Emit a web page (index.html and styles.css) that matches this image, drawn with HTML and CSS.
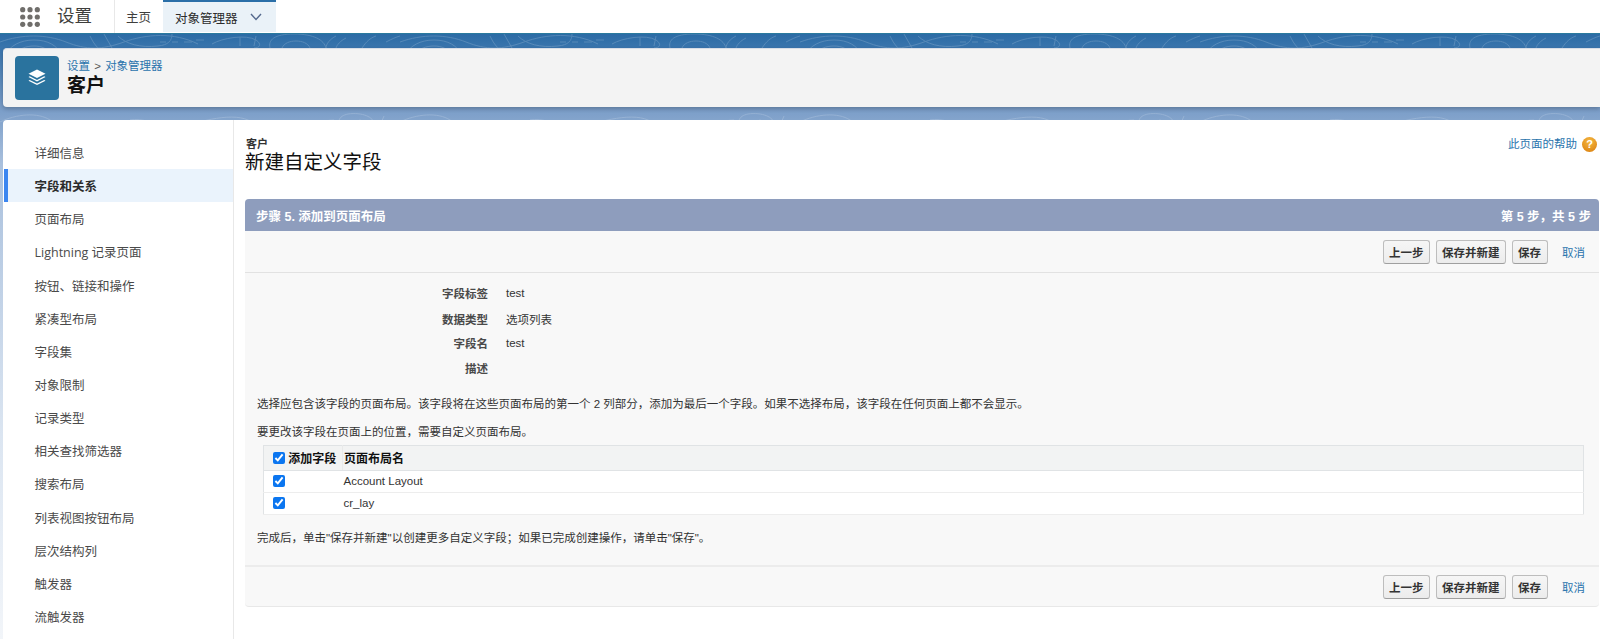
FILE: index.html
```html
<!DOCTYPE html>
<html lang="zh">
<head>
<meta charset="utf-8">
<title>设置</title>
<link rel="stylesheet" href="styles.css">
</head>
<body>
<header class="topnav">
  <svg class="launcher" width="20" height="20" viewBox="0 0 20 20"><g fill="#706e6b"><circle cx="2.700" cy="2.700" r="2.600"/><circle cx="10" cy="2.700" r="2.600"/><circle cx="17.300" cy="2.700" r="2.600"/><circle cx="2.700" cy="10" r="2.600"/><circle cx="10" cy="10" r="2.600"/><circle cx="17.300" cy="10" r="2.600"/><circle cx="2.700" cy="17.300" r="2.600"/><circle cx="10" cy="17.300" r="2.600"/><circle cx="17.300" cy="17.300" r="2.600"/></g></svg>
  <div class="appname">设置</div>
  <nav class="tabs">
    <div class="tab">主页</div>
    <div class="tab tab-active">对象管理器
      <svg class="chev" width="12" height="8" viewBox="0 0 12 8"><path d="M1 1l5 5.500L11 1" fill="none" stroke="#54698d" stroke-width="1.400"/></svg>
    </div>
  </nav>
</header>
<main class="stage">
  <svg class="contours" width="1600" height="606" viewBox="0 0 1600 606">
    <defs>
      <pattern id="topo" width="400" height="100" patternUnits="userSpaceOnUse">
        <g fill="none" stroke="#fff" stroke-width="1">
          <path d="M0 8c22-8 46-8 66 0s36 8 58 0 50-10 74 2"/>
          <path d="M6 20c4-8 14-14 28-14s24 6 26 14M16 20c2-5 10-8 18-8s14 3 16 8"/>
          <path d="M90 2c2 4 4 8 8 12M104 0l8 14M118 2c8 8 22 12 40 10 10-1 14-5 14-12"/>
          <path d="M160 8h6M172 8h6M184 8h8M196 6h8M212 10c10-6 34-10 44-4 6 4 4 8-2 8"/>
          <path d="M270 14c-2-8 4-14 24-14s30 6 32 14M282 14c2-5 8-7 14-7s12 2 14 7"/>
          <path d="M240 3v9M256 2l-2 10M336 2c-6 3-10 8-10 12M346 4c-6 3-9 7-10 10M362 14c4-6 8-10 14-12M386 8c6-3 10-5 14-6"/>
          <path d="M0 88c16-8 38-10 50-2 10 6 6 12 0 14M60 100c18-8 48-10 62 0M130 86c12-2 26 2 36 14"/>
          <path d="M170 98c24-10 60-20 78-12 10 5 14 10 16 14M204 100c8-6 14-8 24-8M276 88l-2 10M300 100c10-8 22-14 34-14"/>
          <path d="M344 94c-8-5-6-12 4-14 14-2 26 3 26 10s-18 9-30 4zM356 90a4 4 0 1 0 8 0a4 4 0 1 0-8 0M384 82l-6 14"/>
        </g>
      </pattern>
    </defs>
    <rect class="topofill" width="1600" height="90" fill="url(#topo)"/>
  </svg>
  <section class="pagehead">
    <div class="headicon">
      <svg width="20" height="20" viewBox="0 0 20 20"><g fill="#fff"><path d="M10 1.500l8.500 4.200L10 10 1.500 5.700z"/><path d="M2.800 8.300L10 11.900l7.200-3.600 1.300.7L10 13.400 1.500 9z"/><path d="M2.800 12l7.200 3.500 7.200-3.500 1.300.7L10 17 1.500 12.700z"/></g></svg>
    </div>
    <div class="headtext">
      <div class="crumbs"><a class="link">设置</a> <span class="gt">&gt;</span> <a class="link">对象管理器</a></div>
      <h1 class="headtitle">客户</h1>
    </div>
  </section>
  <section class="workspace">
    <aside class="sidebar">
      <div class="sideitem">详细信息</div>
      <div class="sideitem sideitem-active">字段和关系</div>
      <div class="sideitem">页面布局</div>
      <div class="sideitem">Lightning 记录页面</div>
      <div class="sideitem">按钮、链接和操作</div>
      <div class="sideitem">紧凑型布局</div>
      <div class="sideitem">字段集</div>
      <div class="sideitem">对象限制</div>
      <div class="sideitem">记录类型</div>
      <div class="sideitem">相关查找筛选器</div>
      <div class="sideitem">搜索布局</div>
      <div class="sideitem">列表视图按钮布局</div>
      <div class="sideitem">层次结构列</div>
      <div class="sideitem">触发器</div>
      <div class="sideitem">流触发器</div>
    </aside>
    <div class="content">
      <div class="pagetop">
        <div>
          <div class="objname">客户</div>
          <h2 class="pagetitle">新建自定义字段</h2>
        </div>
        <div class="help"><a class="link">此页面的帮助</a><span class="helpicon">?</span></div>
      </div>
      <section class="panel">
        <div class="panelhead"><span>步骤 5. 添加到页面布局</span><span class="stepcount">第 5 步，共 5 步</span></div>
        <div class="toolbar">
          <button class="btn">上一步</button><button class="btn">保存并新建</button><button class="btn">保存</button><a class="link cancel">取消</a>
        </div>
        <div class="panelbody">
          <dl class="details">
            <div class="drow r1"><dt>字段标签</dt><dd>test</dd></div>
            <div class="drow r2"><dt>数据类型</dt><dd>选项列表</dd></div>
            <div class="drow r3"><dt>字段名</dt><dd>test</dd></div>
            <div class="drow r4"><dt>描述</dt><dd></dd></div>
          </dl>
          <p class="para p1">选择应包含该字段的页面布局。该字段将在这些页面布局的第一个 2 列部分，添加为最后一个字段。如果不选择布局，该字段在任何页面上都不会显示。</p>
          <p class="para p2">要更改该字段在页面上的位置，需要自定义页面布局。</p>
          <table class="layouts">
            <thead><tr><th class="c1"><input type="checkbox" class="cb" checked> 添加字段</th><th class="c2">页面布局名</th></tr></thead>
            <tbody>
              <tr><td class="c1"><input type="checkbox" class="cb" checked></td><td class="c2">Account Layout</td></tr>
              <tr><td class="c1"><input type="checkbox" class="cb" checked></td><td class="c2">cr_lay</td></tr>
            </tbody>
          </table>
          <p class="para p3">完成后，单击"保存并新建"以创建更多自定义字段；如果已完成创建操作，请单击"保存"。</p>
        </div>
        <div class="toolbar toolbar-bottom">
          <button class="btn">上一步</button><button class="btn">保存并新建</button><button class="btn">保存</button><a class="link cancel">取消</a>
        </div>
      </section>
    </div>
  </section>
</main>
</body>
</html>
```

FILE: styles.css
```css
* { box-sizing: border-box; }
html, body { margin: 0; height: 639px; overflow: hidden; }
body { font-family: "Liberation Sans", "Noto Sans CJK SC", Arial, sans-serif; font-size: 12px; color: #3e3e3c; background: #fff; }
.topnav { height: 33px; display: flex; align-items: center; background: #fff; }
.launcher { margin-left: 20px; flex: none; }
.appname { margin-left: 17px; width: 58px; font-size: 17.500px; color: #3e3e3c; border-right: 1px solid #e8e8e8; line-height: 33px; }
.tabs { display: flex; height: 33px; }
.tab { display: flex; align-items: center; flex: none; white-space: nowrap; padding-left: 11px; width: 48px; font-size: 12.500px; color: #3e3e3c; }
.tab-active { width: 113px; background: #eaf2f8; border-top: 2px solid #2a6fa8; height: 32px; padding-left: 12px; color: #2b2b2b; }
.chev { margin-left: 12px; flex: none; }
.stage { position: relative; height: 606px; padding: 14px 0 0 3px; overflow: hidden; background: linear-gradient(180deg, #2b6ba5 0, #3a75ad 14px, #7a9dc8 75px, #a9c0dd 130px, #dbe5f1 400px, #f2f5f9 606px); border-top: 1px solid #2a7a9e; }
.contours { position: absolute; left: 0; top: 0; }
.topofill { opacity: .17; }
.pagehead { position: relative; height: 59px; display: flex; align-items: center; padding-left: 12px; background: #f3f3f3; border-radius: 4px 0 0 4px; box-shadow: 0 2px 4px rgba(0,0,0,.22); border-top: 1px solid #d8dde6; }
.headicon { width: 44px; height: 44px; background: #2a739e; border-radius: 4px; display: flex; align-items: center; justify-content: center; flex: none; }
.headtext { margin-left: 8px; }
.crumbs { font-size: 11.500px; line-height: 15px; color: #54698d; }
.gt { color: #555; margin: 0 1px; }
.link { color: #2a74ad; text-decoration: none; }
.headtitle { margin: 0; font-size: 19px; line-height: 24px; font-weight: 700; color: #111; }
.workspace { position: relative; margin-top: 13px; height: 520px; display: flex; background: #fff; border-radius: 4px 0 0 0; }
.sidebar { width: 231px; flex: none; padding: 16px 0 0 1px; border-right: 1px solid #e8e8e8; }
.sideitem { height: 33.150px; line-height: 36px; padding-left: 30.500px; font-family: "Open Sans", "Noto Sans CJK SC", sans-serif; font-size: 12.500px; color: #4a4a4a; }
.sideitem-active { background: #eaf3fc; border-left: 4px solid #3b86f0; padding-left: 26.500px; font-weight: 700; color: #2b2b2b; }
.content { flex: 1; padding: 0 0 0 11px; min-width: 0; }
.pagetop { height: 79px; padding-top: 18px; display: flex; justify-content: space-between; }
.objname { font-size: 11px; line-height: 12px; font-weight: 700; color: #333; margin-left: 1px; }
.pagetitle { margin: 0; font-size: 19.500px; line-height: 24px; font-weight: 400; color: #111; }
.help { display: flex; align-items: flex-start; margin-top: -1px; padding-right: 3px; font-size: 11.500px; line-height: 15px; }
.helpicon { width: 15px; height: 15px; margin-left: 5px; border-radius: 50%; background: radial-gradient(circle at 50% 30%, #f5b942, #d97c0c); color: #fff; font-size: 11px; font-weight: 700; line-height: 15px; text-align: center; }
.panel { margin-right: 1px; background: #f8f8f8; border-radius: 4px; border-bottom: 1px solid #e8e8e8; }
.panelhead { height: 32px; padding: 0 8px 0 11px; display: flex; justify-content: space-between; align-items: center; background: #8e9dbd; border-radius: 4px 4px 0 0; color: #fff; font-size: 12.500px; font-weight: 700; }
.toolbar { height: 42px; display: flex; align-items: center; justify-content: flex-end; padding-right: 14px; border-bottom: 1px solid #e2e2e2; }
.toolbar-bottom { height: 41px; border-bottom: 0; border-top: 2px solid #ececec; }
.btn { height: 24px; padding: 0 5.500px; margin-right: 5.500px; font: 700 11.500px "Liberation Sans", "Noto Sans CJK SC", sans-serif; color: #333; background: linear-gradient(#f6f6f6, #ececec); border: 1px solid #bdbdbd; border-bottom-color: #9f9f9f; border-radius: 3px; }
.cancel { margin-left: 9px; font-size: 11.500px; }
.panelbody { height: 292px; padding-top: 8px; }
.details { margin: 0; }
.drow { display: flex; align-items: center; }
.drow dt { width: 243px; text-align: right; font-size: 11.500px; font-weight: 700; color: #4a4a4a; }
.drow dd { margin: 0 0 0 18px; font-size: 11.500px; color: #333; }
.r1 { height: 24px; }
.r2 { height: 28px; }
.r3 { height: 20px; }
.r4 { height: 30px; }
.para { margin: 0 0 0 12px; font-size: 11.500px; line-height: 15px; color: #333; }
.p1 { margin-top: 14px; }
.p2 { margin-top: 13px; }
.p3 { margin-top: 16px; }
.layouts { margin: 5px 0 0 18px; width: 1321px; border-collapse: collapse; background: #fff; border: 1px solid #e0e3e5; font-size: 11.500px; color: #333; }
.layouts th { height: 25px; background: #f2f3f3; text-align: left; font-size: 12px; font-weight: 700; color: #111; border-bottom: 1px solid #e0e3e5; }
.layouts th.c1 { border-right: 1px solid #e9eaea; padding-bottom: 2px; }
.layouts td { height: 22px; border-bottom: 1px solid #ededed; }
.c1 { width: 79px; padding: 0 0 0 9px; }
.layouts .c2 { padding: 0 0 2px 1px; }
.cb { width: 12px; height: 12px; margin: 0; accent-color: #0b76f0; vertical-align: -1px; }
```
